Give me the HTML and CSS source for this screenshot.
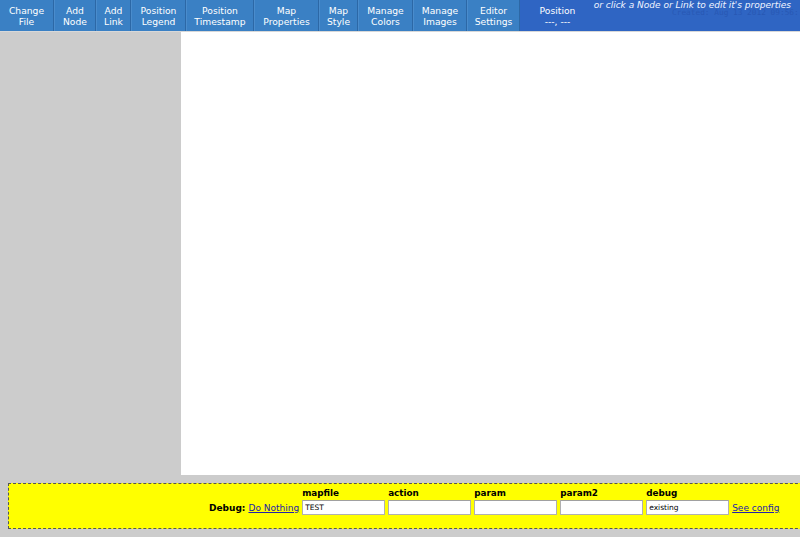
FILE: index.html
```html
<!DOCTYPE html>
<html lang="en">
<head>
    <meta charset="UTF-8">
    <title>Weathermap Editor</title>
    <link rel="stylesheet" href="styles.css">
</head>
<body>
    <div class="toolbar">
        <ul class="tools">
            <li class="w54">Change<br>File</li>
            <li class="w42">Add<br>Node</li>
            <li class="w35">Add<br>Link</li>
            <li class="w55">Position<br>Legend</li>
            <li class="w68">Position<br>Timestamp</li>
            <li class="w65">Map<br>Properties</li>
            <li class="w39">Map<br>Style</li>
            <li class="w55">Manage<br>Colors</li>
            <li class="w54">Manage<br>Images</li>
            <li class="w53">Editor<br>Settings</li>
        </ul>
        <div class="position">Position<br>---, ---</div>
        <div class="created">Created: Aug 13 2012 09:56:</div>
        <div class="hint">or click a Node or Link to edit it's properties</div>
    </div>

    <div class="main">
        <div class="side"></div>
        <div class="canvas"></div>
    </div>

    <div class="debug">
        <span class="debug-label">Debug:</span>
        <a href="#" class="debug-link">Do Nothing</a>
        <div class="field"><label>mapfile</label><input type="text" value="TEST"></div>
        <div class="field"><label>action</label><input type="text"></div>
        <div class="field"><label>param</label><input type="text"></div>
        <div class="field"><label>param2</label><input type="text"></div>
        <div class="field"><label>debug</label><input type="text" value="existing"></div>
        <a href="#" class="debug-link">See config</a>
    </div>
</body>
</html>
```

FILE: styles.css
```css
* {
    margin: 0;
    padding: 0;
    box-sizing: border-box;
}

body {
    background: #cccccc;
    font-family: "DejaVu Sans", Verdana, sans-serif;
    font-size: 10px;
    overflow: hidden;
}

/* top toolbar */
.toolbar {
    position: relative;
    display: flex;
    height: 32px;
    background: #2f65c3;
    border-bottom: 1px solid #d8d8d8;
    color: white;
}

.tools {
    display: flex;
    list-style: none;
}

.tools li {
    background: #3a80c4;
    border-right: 1px solid #2c68a6;
    border-left: 1px solid #4a8ccc;
    text-align: center;
    line-height: 11px;
    padding-top: 5px;
    font-size: 9.2px;
    cursor: pointer;
}

.tools li:first-child {
    border-left: none;
}

.w35 { width: 35px; }
.w39 { width: 39px; }
.w42 { width: 42px; }
.w53 { width: 53px; }
.w54 { width: 54px; }
.w55 { width: 55px; }
.w65 { width: 65px; }
.w68 { width: 68px; }

.position {
    width: 75px;
    text-align: center;
    line-height: 11px;
    padding-top: 5px;
    font-size: 9.2px;
}

.created {
    position: absolute;
    top: 8px;
    left: 672px;
    font-family: "DejaVu Sans Mono", monospace;
    font-size: 7.8px;
    color: #2858b4;
    white-space: nowrap;
}

.hint {
    position: absolute;
    top: 0;
    right: 9px;
    font-style: italic;
    font-size: 9px;
    color: #f0f4ff;
    white-space: nowrap;
}

/* map area */
.main {
    display: flex;
    height: 443px;
}

.side {
    width: 181px;
}

.canvas {
    flex: 1;
    background: white;
}

/* debug bar */
.debug {
    display: flex;
    align-items: flex-end;
    gap: 3px;
    width: 830px;
    height: 46px;
    margin: 8px 0 0 8px;
    padding: 0 0 13px 200px;
    background: #ffff00;
    border: 1px dashed #555555;
}

.debug-label {
    font-weight: bold;
    font-size: 9px;
    padding-bottom: 2px;
}

.debug-link {
    color: #2222aa;
    font-size: 9px;
    padding-bottom: 2px;
}

.field {
    display: flex;
    flex-direction: column;
    width: 83px;
}

.field label {
    font-weight: bold;
    font-size: 8.8px;
    margin-bottom: 2px;
}

.field input {
    width: 83px;
    height: 15px;
    border: 1px solid #b0b0b0;
    border-top-color: #a0a0a0;
    font-family: "DejaVu Sans", sans-serif;
    font-size: 7.5px;
    padding: 0 2px;
}
```
